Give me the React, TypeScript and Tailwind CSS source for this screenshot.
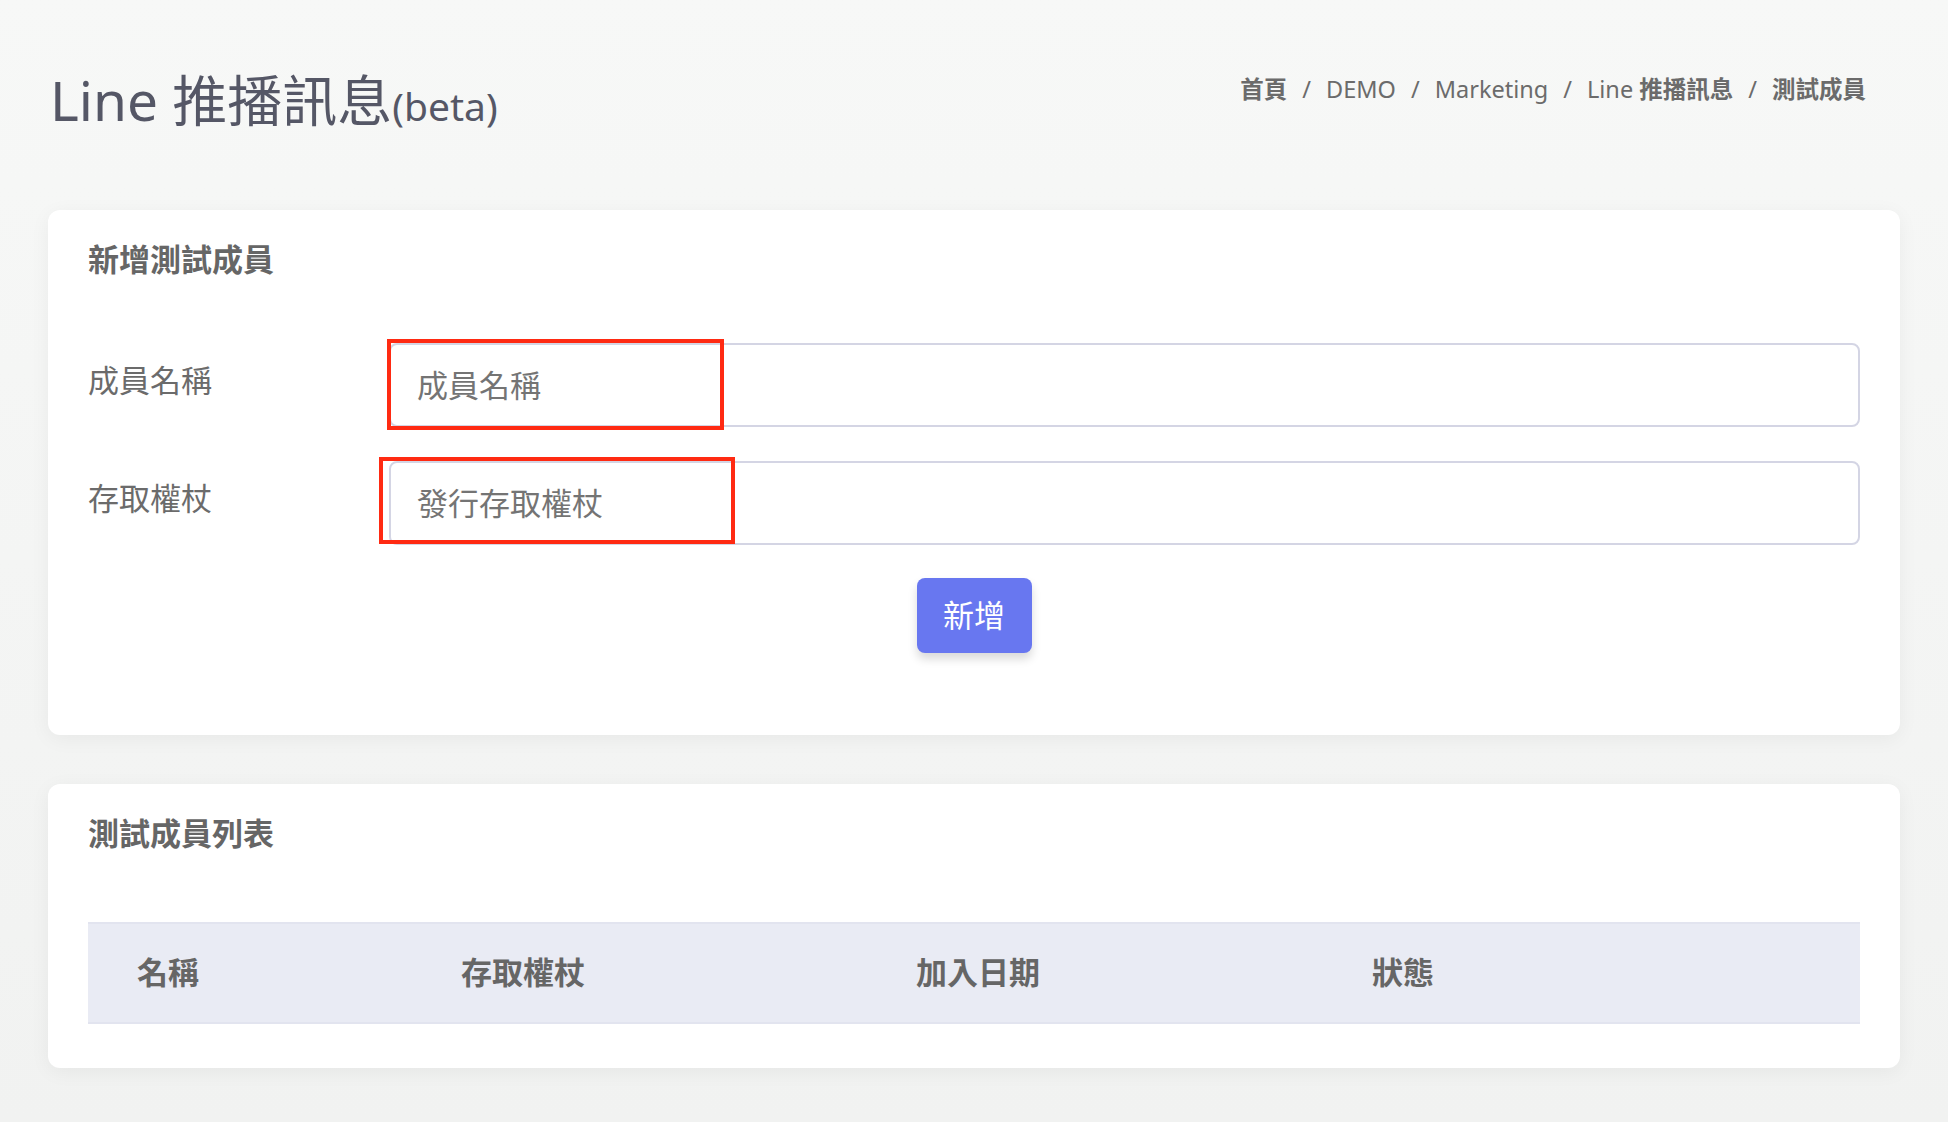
import React from 'react';

const font = { fontFamily: '"Noto Sans", "Noto Sans CJK TC", sans-serif' };

function Header() {
  return (
    <div className="flex justify-between items-start h-[210px] pt-[72px]">
      <h1 className="text-[55px] leading-none text-[#555766] pl-[2px]">
        Line 推播訊息<span className="text-[39px]">(beta)</span>
      </h1>
      <nav className="flex items-center gap-[15px] text-[23.5px] text-[#6b6b6b] pt-0 pr-[34px]">
        <span className="font-bold">首頁</span>
        <span>/</span>
        <span>DEMO</span>
        <span>/</span>
        <span>Marketing</span>
        <span>/</span>
        <span>
          Line <span className="font-bold">推播訊息</span>
        </span>
        <span>/</span>
        <span className="font-bold">測試成員</span>
      </nav>
    </div>
  );
}

function Field({ label, placeholder, box }: { label: string; placeholder: string; box: string }) {
  return (
    <div className="flex items-center">
      <label className="w-[301px] text-[31px] text-[#6b6b6b] -mt-[8px]">{label}</label>
      <div className="relative flex-1">
        <input
          placeholder={placeholder}
          className="w-full h-[84px] border-2 border-[#d4d5e4] rounded-[8px] px-[26px] text-[31px] placeholder:text-[#747474] outline-none"
        />
        <div className={`absolute border-[4px] border-[#ff2a12] pointer-events-none ${box}`} />
      </div>
    </div>
  );
}

export default function App() {
  return (
    <div style={font} className="min-h-[1122px] bg-gradient-to-b from-[#f7f8f7] to-[#f1f2f1] px-[48px]">
      <Header />
      <section className="bg-white rounded-[12px] shadow-[0_4px_20px_rgba(0,0,0,0.05)] pt-[26px] px-[40px] h-[525px]">
        <h2 className="text-[31px] font-bold text-[#666]">新增測試成員</h2>
        <div className="mt-[60px] flex flex-col gap-[34px]">
          <Field label="成員名稱" placeholder="成員名稱" box="-left-[2px] -top-[4px] w-[337px] h-[91px]" />
          <Field label="存取權杖" placeholder="發行存取權杖" box="-left-[10px] -top-[4px] w-[356px] h-[87px]" />
        </div>
        <div className="flex justify-center mt-[33px]">
          <button className="w-[115px] h-[75px] rounded-[8px] bg-[#6877f0] text-white text-[31px] shadow-[0_6px_10px_rgba(0,0,0,0.15)]">
            新增
          </button>
        </div>
      </section>
      <section className="mt-[49px] bg-white rounded-[12px] shadow-[0_4px_20px_rgba(0,0,0,0.05)] pt-[26px] px-[40px] h-[284px]">
        <h2 className="text-[31px] font-bold text-[#666]">測試成員列表</h2>
        <div className="mt-[65px] h-[102px] bg-[#e9ebf4] border-y-2 border-[#e2e4ef] grid grid-cols-[324px_455px_456px_1fr] items-center pl-[49px] text-[31px] font-bold text-[#666]">
          <span>名稱</span>
          <span>存取權杖</span>
          <span>加入日期</span>
          <span>狀態</span>
        </div>
      </section>
    </div>
  );
}
